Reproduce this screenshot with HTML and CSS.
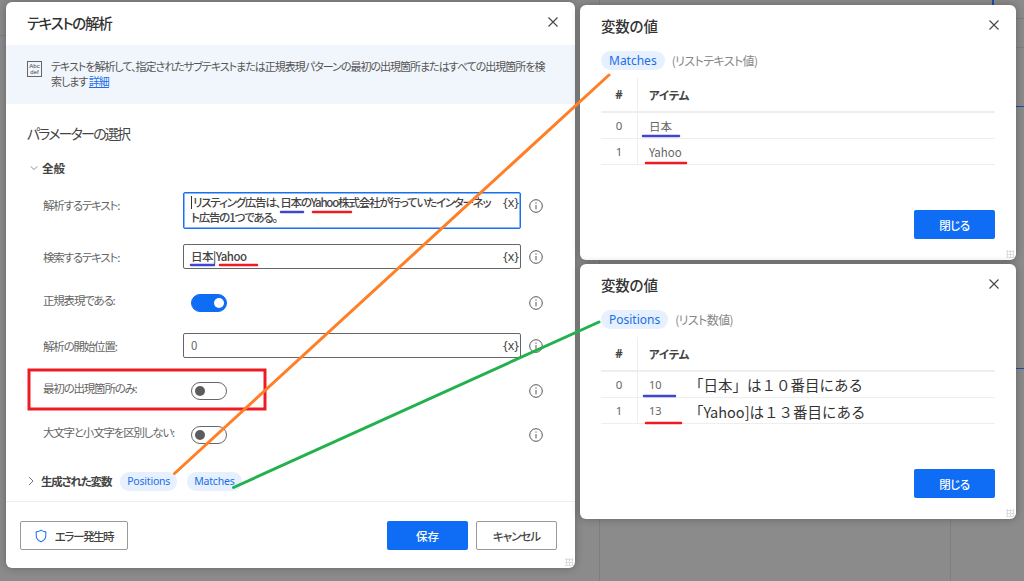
FILE: index.html
```html
<!DOCTYPE html>
<html lang="ja">
<head>
<meta charset="utf-8">
<title>テキストの解析</title>
<link rel="stylesheet" href="styles.css">
</head>
<body>
<div class="desktop">
  <div class="bg-line v1"></div>
  <div class="bg-line v2"></div>
  <div class="bg-line h1"></div>
  <div class="bg-line h2"></div>
  <div class="bg-line h3"></div>
  <div class="bg-blue b1"></div>
  <div class="bg-blue b2"></div>
  <div class="bg-blue b3"></div>

  <section class="window main">
    <header class="main-head">
      <h1 class="title">テキストの解析</h1>
      <svg class="close" viewBox="0 0 12 12"><path d="M1.5 1.5l9 9M10.5 1.5l-9 9"/></svg>
    </header>
    <div class="banner">
      <div class="abc"><span>Abc</span><span>def</span></div>
      <p class="banner-text">テキストを解析して、指定されたサブテキストまたは正規表現パターンの最初の出現箇所またはすべての出現箇所を検<br>索します <a class="link">詳細</a></p>
    </div>
    <h2 class="section-title">パラメーターの選択</h2>
    <div class="group-head">
      <svg class="chev" viewBox="0 0 10 10"><path d="M1 3l4 4 4-4"/></svg>
      <span class="strong">全般</span>
    </div>
    <div class="form">
      <div class="row">
        <label class="lbl">解析するテキスト:</label>
        <div class="field tall focus"><span class="val"><span class="caret"></span>リスティング広告は、日本のYahoo株式会社が行っていたインターネッ<br>ト広告の1つである。</span><span class="fx">{x}</span></div>
        <svg class="info" viewBox="0 0 14 14"><circle cx="7" cy="7" r="6.3"/><path d="M7 6v4.400M7 3.400v1.300"/></svg>
      </div>
      <div class="row g15">
        <label class="lbl">検索するテキスト:</label>
        <div class="field"><span class="val search">日本|Yahoo</span><span class="fx">{x}</span></div>
        <svg class="info" viewBox="0 0 14 14"><circle cx="7" cy="7" r="6.3"/><path d="M7 6v4.400M7 3.400v1.300"/></svg>
      </div>
      <div class="row trow g22">
        <label class="lbl">正規表現である:</label>
        <div class="slot"><span class="toggle on"></span></div>
        <svg class="info" viewBox="0 0 14 14"><circle cx="7" cy="7" r="6.3"/><path d="M7 6v4.400M7 3.400v1.300"/></svg>
      </div>
      <div class="row g18">
        <label class="lbl">解析の開始位置:</label>
        <div class="field"><span class="val num">0</span><span class="fx">{x}</span></div>
        <svg class="info" viewBox="0 0 14 14"><circle cx="7" cy="7" r="6.3"/><path d="M7 6v4.400M7 3.400v1.300"/></svg>
      </div>
      <div class="row trow g21">
        <label class="lbl">最初の出現箇所のみ:</label>
        <div class="slot"><span class="toggle"></span></div>
        <svg class="info" viewBox="0 0 14 14"><circle cx="7" cy="7" r="6.3"/><path d="M7 6v4.400M7 3.400v1.300"/></svg>
      </div>
      <div class="row trow g20">
        <label class="lbl">大文字と小文字を区別しない:</label>
        <div class="slot"><span class="toggle"></span></div>
        <svg class="info" viewBox="0 0 14 14"><circle cx="7" cy="7" r="6.3"/><path d="M7 6v4.400M7 3.400v1.300"/></svg>
      </div>
    </div>
    <div class="vars">
      <svg class="chev-r" viewBox="0 0 10 10"><path d="M3 1l4 4-4 4"/></svg>
      <span class="strong">生成された変数</span>
      <span class="chip small c1">Positions</span>
      <span class="chip small">Matches</span>
    </div>
    <footer class="main-foot">
      <button class="btn ghost err"><svg class="shield" viewBox="0 0 14 16"><path d="M7 1.200c1.800 1.300 3.600 1.900 5.600 2v4.600c0 3.200-2.200 5.600-5.600 7-3.400-1.400-5.600-3.800-5.600-7V3.200c2-.1 3.800-.7 5.600-2z"/></svg>エラー発生時</button>
      <span class="spacer"></span>
      <button class="btn primary save">保存</button>
      <button class="btn ghost cancel">キャンセル</button>
    </footer>
    <span class="grip"></span>
  </section>

  <section class="window value w1">
    <header class="value-head">
      <h1 class="title vt">変数の値</h1>
      <svg class="close" viewBox="0 0 12 12"><path d="M1.5 1.500l9 9M10.500 1.500l-9 9"/></svg>
    </header>
    <div class="chip-row"><span class="chip">Matches</span><span class="type">(リストテキスト値)</span></div>
    <div class="table">
      <div class="tr th"><span class="idx">#</span><span class="item">アイテム</span></div>
      <div class="tr"><span class="idx">0</span><span class="item">日本</span></div>
      <div class="tr"><span class="idx">1</span><span class="item">Yahoo</span></div>
    </div>
    <button class="btn primary closebtn">閉じる</button>
    <span class="grip"></span>
  </section>

  <section class="window value w2">
    <header class="value-head">
      <h1 class="title vt">変数の値</h1>
      <svg class="close" viewBox="0 0 12 12"><path d="M1.5 1.500l9 9M10.500 1.500l-9 9"/></svg>
    </header>
    <div class="chip-row"><span class="chip">Positions</span><span class="type">(リスト数値)</span></div>
    <div class="table">
      <div class="tr th"><span class="idx">#</span><span class="item">アイテム</span></div>
      <div class="tr"><span class="idx">0</span><span class="item n">10</span><span class="note">「日本」は１０番目にある</span></div>
      <div class="tr"><span class="idx">1</span><span class="item n">13</span><span class="note low">「Yahoo]は１３番目にある</span></div>
    </div>
    <button class="btn primary closebtn">閉じる</button>
    <span class="grip"></span>
  </section>

  <svg class="marks" viewBox="0 0 1024 581">
    <rect class="m-box" x="29" y="370" width="236" height="39"/>
    <path class="m-blue" d="M281 212h22M191 265h23M643 136h36M644 396h31"/>
    <path class="m-red" d="M313 212h38M220 265h37M646 163h40M646 423h35"/>
    <path class="m-orange" d="M174.500 473.500L609 75"/>
    <path class="m-green" d="M233.500 487.500L599 322"/>
  </svg>
</div>
</body>
</html>
```
FILE: styles.css
```css
* { box-sizing: border-box; }
html, body { margin: 0; padding: 0; }
body {
  width: 1024px;
  height: 581px;
  overflow: hidden;
  font-family: "Noto Sans CJK JP", "Noto Sans", sans-serif;
  font-feature-settings: "palt";
  color: #333;
}
.desktop { position: relative; width: 1024px; height: 581px; background: #8b8b8b; overflow: hidden; }

.bg-line { position: absolute; background: #7e7e7e; }
.v1 { left: 599px; top: 0; width: 1px; height: 581px; }
.v2 { left: 950px; top: 519px; width: 1px; height: 62px; }
.h1 { left: 1016px; top: 18px; width: 8px; height: 1px; }
.h2 { left: 1016px; top: 47px; width: 8px; height: 1px; }
.h3 { left: 0; top: 35px; width: 6px; height: 1px; }
.bg-blue { position: absolute; background: #1c4fa8; }
.b1 { left: 992px; top: 0; width: 2px; height: 5px; }
.b2 { left: 1016px; top: 106px; width: 8px; height: 1px; }
.b3 { left: 1016px; top: 368px; width: 8px; height: 1px; }

.window { position: absolute; background: #fff; border-radius: 6px; box-shadow: 0 0 8px rgba(0,0,0,.28); }
.main { left: 6px; top: 2px; width: 569px; height: 566px; display: flex; flex-direction: column; }
.value { left: 580px; width: 436px; height: 255px; padding: 0 21px; display: flex; flex-direction: column; }
.w1 { top: 5px; }
.w2 { top: 264px; }

.title { margin: 0; font-size: 14.5px; letter-spacing: -1.3px; font-weight: 500; color: #333; line-height: 20px; }
.title.vt { letter-spacing: -.2px; }
.close { width: 12px; height: 12px; fill: none; stroke: #444; stroke-width: 1.1; flex: none; }
.main-head { height: 43px; padding: 11px 16px 0 21px; display: flex; justify-content: space-between; align-items: flex-start; }
.main-head .close { margin-top: 3px; }
.banner { height: 59px; background: #f1f5fc; padding: 14px 21px 0 21px; display: flex; gap: 9px; align-items: flex-start; }
.abc { width: 15px; height: 16px; margin-top: 2px; border: 1px solid #666; font: 6px/6px "Liberation Sans", sans-serif; color: #444; display: flex; flex-direction: column; align-items: center; padding-top: 1px; flex: none; }
.banner-text { margin: 0; font-size: 11px; letter-spacing: -1px; line-height: 15px; color: #555; white-space: nowrap; }
.link { color: #1a6fe8; text-decoration: underline; }
.section-title { margin: 18px 0 0 21px; font-size: 14px; letter-spacing: -1.8px; font-weight: 400; line-height: 22px; color: #444; }
.group-head { margin: 14px 0 0 24px; height: 20px; display: flex; align-items: center; gap: 4px; }
.chev { width: 8px; height: 8px; fill: none; stroke: #888; stroke-width: 1.2; }
.chev-r { width: 10px; height: 10px; fill: none; stroke: #777; stroke-width: 1; }
.strong { font-size: 11.5px; letter-spacing: -1.1px; font-weight: 700; color: #444; }
.group-head .strong { letter-spacing: 0; }

.form { margin: 14px 0 0 37px; width: 510px; display: flex; flex-direction: column; }
.row { display: flex; align-items: center; }
.g15 { margin-top: 15px; }
.g18 { margin-top: 18px; }
.g20 { margin-top: 20px; }
.g21 { margin-top: 21px; }
.g22 { margin-top: 22px; }
.lbl { width: 140px; flex: none; font-size: 11.5px; letter-spacing: -1.2px; line-height: 16px; color: #666; white-space: nowrap; }
.row:first-child { align-items: flex-start; }
.row:first-child .lbl { margin-top: 5px; }
.row:first-child .info { margin-top: 7px; }
.trow { height: 24px; }
.trow .lbl { margin-top: -6px; }
.field { width: 338px; height: 25px; flex: none; border: 1px solid #666; border-radius: 2px; padding: 0 1px 0 7px; display: flex; justify-content: space-between; align-items: center; }
.tall { height: 37px; align-items: flex-start; padding-top: 2px; }
.focus { border: 1px solid #1670f0; box-shadow: inset 0 0 0 .5px #1670f0; }
.val { font-size: 11.5px; letter-spacing: -1.2px; font-weight: 500; line-height: 15px; color: #444; white-space: nowrap; }
.caret { display: inline-block; width: 1px; height: 13px; margin-right: 1px; vertical-align: -2px; background: #333; }
.search { letter-spacing: -.5px; }
.num { font-weight: 400; color: #666; letter-spacing: 0; }
.fx { font: 12.5px/15px "Noto Sans", sans-serif; color: #444; }
.info { width: 14px; height: 14px; margin-left: 8px; flex: none; fill: none; stroke: #555; stroke-width: 1; }
.slot { width: 338px; flex: none; padding-left: 8px; display: flex; }
.toggle { width: 36px; height: 18px; border: 1px solid #666; border-radius: 9px; position: relative; display: block; background: #fff; }
.toggle::after { content: ""; position: absolute; left: 3px; top: 3px; width: 10px; height: 10px; border-radius: 50%; background: #5c5c5c; }
.toggle.on { background: #0f6cf5; border-color: #0f6cf5; }
.toggle.on::after { left: 22px; background: #fff; }

.vars { margin: 24px 0 0 20px; height: 20px; display: flex; align-items: center; }
.vars .strong { margin-left: 5px; letter-spacing: -1.2px; }
.chip { background: #e6f0fe; color: #1a6fe8; border-radius: 10px; height: 19px; padding: 0 8px; font: 12px/19px "Noto Sans", sans-serif; white-space: nowrap; }
.chip.small { font-size: 10.5px; letter-spacing: -.2px; margin-left: 10px; padding: 0 7px; border-radius: 9px; }
.chip.c1 { margin-left: 9px; }

.main-foot { margin-top: 10px; border-top: 1px solid #eee; padding: 19px 18px 0 14px; display: flex; }
.spacer { flex: 1; }
.btn { height: 29px; border-radius: 2px; font-family: inherit; font-feature-settings: "palt"; font-size: 11.5px; font-weight: 500; padding: 0; display: flex; align-items: center; justify-content: center; }
.ghost { background: #fff; border: 1px solid #999; color: #444; }
.primary { background: #0f6cf5; border: 0; color: #fff; }
.err { width: 108px; gap: 8px; letter-spacing: -1.4px; }
.shield { width: 12px; height: 14px; fill: none; stroke: #1a6fe8; stroke-width: 1.2; }
.save { width: 81px; }
.cancel { width: 81px; margin-left: 8px; letter-spacing: -1px; }

.value-head { height: 46px; padding-top: 11px; display: flex; justify-content: space-between; align-items: flex-start; }
.value-head .close { margin: 3px -5px 0 0; }
.chip-row { display: flex; align-items: center; gap: 7px; }
.type { font-size: 12px; letter-spacing: -.6px; line-height: 19px; color: #888; }
.table { margin-top: 8px; display: flex; flex-direction: column; }
.tr { height: 26px; display: flex; align-items: center; border-bottom: 1px solid #eee; font-size: 11.5px; color: #666; }
.th { height: 35px; font-weight: 700; color: #444; border-bottom-width: 2px; }
.idx { width: 37px; flex: none; align-self: stretch; display: flex; align-items: center; justify-content: center; border-right: 1px solid #eee; font-family: "Noto Sans", sans-serif; }
.item { padding-left: 11px; }
.item.n { width: 51px; font-family: "Noto Sans", sans-serif; font-size: 11px; }
.th .item { letter-spacing: -.2px; }
.note { font-size: 14.5px; font-feature-settings: normal; color: #333; white-space: nowrap; }
.low { margin-top: 2px; }
.closebtn { width: 81px; height: 29px; margin: 45px 0 0 auto; letter-spacing: -.5px; }

.grip { position: absolute; right: 2px; bottom: 2px; width: 8px; height: 8px; background: radial-gradient(circle, #ddd 1px, transparent 1.2px) 0 0 / 3px 3px; }

.marks { position: absolute; left: 0; top: 0; width: 1024px; height: 581px; fill: none; stroke-linecap: round; pointer-events: none; }
.m-box { stroke: #ed1c24; stroke-width: 3; stroke-linecap: butt; }
.m-blue { stroke: #3f48cc; stroke-width: 2.5; }
.m-red { stroke: #ed1c24; stroke-width: 2.5; }
.m-orange { stroke: #ff7f27; stroke-width: 3; }
.m-green { stroke: #22b14c; stroke-width: 3; }
```
